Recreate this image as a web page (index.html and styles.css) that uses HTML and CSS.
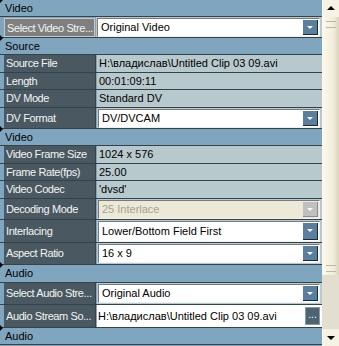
FILE: index.html
```html
<!DOCTYPE html>
<html lang="en">
<head>
    <meta charset="UTF-8">
    <title>Clip Properties</title>
    <link rel="stylesheet" href="styles.css">
</head>
<body>
    <div class="panel">
        <div class="grid">
            <div class="head">Video</div>
            <div class="row h21">
                <div class="label selected">Select Video Stre...</div>
                <div class="value"><div class="combo"><span>Original Video</span><span class="drop"></span></div></div>
            </div>

            <div class="head">Source</div>
            <div class="row h18"><div class="label">Source File</div><div class="value">H:\владислав\Untitled Clip 03 09.avi</div></div>
            <div class="row"><div class="label">Length</div><div class="value">00:01:09:11</div></div>
            <div class="row h18"><div class="label">DV Mode</div><div class="value">Standard DV</div></div>
            <div class="row h21">
                <div class="label">DV Format</div>
                <div class="value"><div class="combo"><span>DV/DVCAM</span><span class="drop"></span></div></div>
            </div>

            <div class="head">Video</div>
            <div class="row h18"><div class="label">Video Frame Size</div><div class="value">1024 x 576</div></div>
            <div class="row"><div class="label">Frame Rate(fps)</div><div class="value">25.00</div></div>
            <div class="row h18"><div class="label">Video Codec</div><div class="value">'dvsd'</div></div>
            <div class="row h21">
                <div class="label">Decoding Mode</div>
                <div class="value"><div class="combo disabled"><span>25 Interlace</span><span class="drop"></span></div></div>
            </div>
            <div class="row h23">
                <div class="label">Interlacing</div>
                <div class="value"><div class="combo"><span>Lower/Bottom Field First</span><span class="drop"></span></div></div>
            </div>
            <div class="row h22">
                <div class="label">Aspect Ratio</div>
                <div class="value"><div class="combo"><span>16 x 9</span><span class="drop"></span></div></div>
            </div>

            <div class="head tall">Audio</div>
            <div class="row h22">
                <div class="label">Select Audio Stre...</div>
                <div class="value"><div class="combo"><span>Original Audio</span><span class="drop"></span></div></div>
            </div>
            <div class="row h23">
                <div class="label">Audio Stream So...</div>
                <div class="value browse"><div class="field">H:\владислав\Untitled Clip 03 09.avi</div><span class="dots">...</span></div>
            </div>

            <div class="head">Audio</div>
        </div>

        <!-- Vertical scrollbar -->
        <div class="scrollbar">
            <div class="arrow up"></div>
            <div class="thumb"><span class="grip"></span><span class="grip bottom"></span></div>
            <div class="track"></div>
            <div class="arrow down"></div>
        </div>
    </div>
</body>
</html>
```

FILE: styles.css
```css
/* Page */
body {
    margin: 0;
    font-family: "Liberation Sans", Arial, sans-serif;
    font-size: 11px;
    background-color: #80a5be;
}

.panel {
    display: flex;
    width: 339px;
    height: 346px;
    overflow: hidden;
}

/* Property grid */
.grid {
    width: 322px;
    background-color: #80a5be;
}

/* Category header rows */
.head {
    position: relative;
    height: 16px;
    line-height: 16px;
    padding-left: 5px;
    color: #000;
    border-bottom: 1px solid #34424a;
}

.head.tall {
    height: 17px;
    line-height: 17px;
}

/* Small marker on the header's top edge */
.head::before {
    content: "";
    position: absolute;
    left: 0;
    top: -3px;
    border-top: 3px solid transparent;
    border-bottom: 3px solid transparent;
    border-left: 3px solid #000;
}

/* Property rows (height given without the bottom line) */
.row {
    display: flex;
    height: 16px;
    line-height: 16px;
    padding-left: 4px;
    border-bottom: 1px solid #34424a;
}

.row.h18 { height: 17px; line-height: 17px; }
.row.h21 { height: 20px; line-height: 20px; }
.row.h22 { height: 21px; line-height: 21px; }
.row.h23 { height: 22px; line-height: 22px; }

.label {
    width: 89px;
    padding-left: 2px;
    border-right: 1px solid #34424a;
    margin-right: 1px;
    background-color: #4a5961;
    color: #f2f4f5;
    letter-spacing: -0.4px;
    white-space: nowrap;
    overflow: hidden;
}

/* Focused property name */
.label.selected {
    width: 87px;
    margin-top: 1px;
    line-height: 18px;
    background-color: #7f7f7f;
    border: 1px solid #c8c8c8;
}

.value {
    flex: 1;
    padding-left: 2px;
    background-color: #b8c9cd;
    color: #000;
    white-space: nowrap;
    overflow: hidden;
}

.h21 .value,
.h22 .value,
.h23 .value {
    display: flex;
    align-items: center;
    padding: 0 2px 0 1px;
}

/* Drop-down boxes */
.combo {
    flex: 1;
    display: flex;
    height: 17px;
    line-height: 17px;
    background-color: #fff;
    border-top: 1px solid #7a7a7a;
    border-left: 1px solid #7a7a7a;
    border-right: 1px solid #f0f0f0;
    border-bottom: 1px solid #f0f0f0;
}

.h23 .combo {
    height: 19px;
    line-height: 19px;
}

.combo span:first-child {
    flex: 1;
    padding-left: 3px;
}

.drop {
    position: relative;
    width: 14px;
    margin: 1px 1px 1px 0;
    background-color: #5a7f9c;
    border-right: 1px solid #1a2a34;
    border-bottom: 1px solid #1a2a34;
}

.drop::after {
    content: "";
    position: absolute;
    left: 4px;
    top: 6px;
    border-left: 3px solid transparent;
    border-right: 3px solid transparent;
    border-top: 3px solid #fff;
}

.combo.disabled {
    background-color: #ece9d8;
    color: #a5a291;
}

.combo.disabled .drop {
    background-color: #c0c0c0;
    border-color: #8c8c8c;
}

/* File field with browse button */
.h23 .value.browse {
    align-items: stretch;
    padding: 0 2px 0 0;
    background-color: #fff;
}

.field {
    flex: 1;
    padding-left: 1px;
    overflow: hidden;
}

.dots {
    width: 13px;
    margin: 2px 0;
    background-color: #4e6470;
    border: 1px solid #8a9aa4;
    color: #fff;
    line-height: 14px;
    text-align: center;
    font-size: 10px;
}

/* Scrollbar */
.scrollbar {
    display: flex;
    flex-direction: column;
    width: 17px;
    background-color: #e2dfd0;
}

.arrow {
    position: relative;
    height: 17px;
    background-color: #f6f3e4;
    border-left: 1px solid #fffdf4;
}

.arrow::after {
    content: "";
    position: absolute;
    left: 4px;
    border-left: 4px solid transparent;
    border-right: 4px solid transparent;
}

.arrow.up::after {
    top: 6px;
    border-bottom: 4px solid #000;
}

.arrow.down::after {
    top: 7px;
    border-top: 4px solid #000;
}

.thumb {
    position: relative;
    height: 258px;
    background: linear-gradient(to right, #fdfaee, #f1ecd8 70%, #d8d2bc);
}

.grip {
    position: absolute;
    left: 4px;
    top: 4px;
    width: 10px;
    height: 5px;
    border-top: 1px solid #bdb8a4;
    border-bottom: 1px solid #bdb8a4;
}

.grip.bottom {
    top: auto;
    bottom: 3px;
}

.track {
    flex: 1;
}
```
